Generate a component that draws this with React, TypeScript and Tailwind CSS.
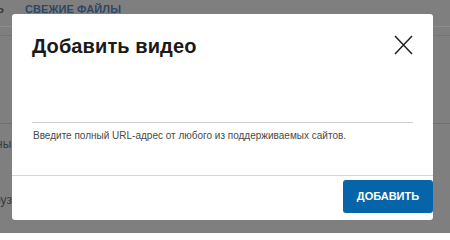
import React from "react";

export default function App() {
  return (
    <div
      className="relative w-[450px] h-[233px] overflow-hidden bg-[#7f7f7f]"
      style={{ fontFamily: '"Liberation Sans", Arial, sans-serif' }}
    >
      {/* background page (dimmed) */}
      <div className="flex flex-col">
        <div className="h-[26px] flex items-start pt-[2px] text-[11px] leading-[14px] font-bold">
          <span className="-ml-[4px] text-[#3a3a3a]">Ь</span>
          <span className="ml-[21px] text-[#2c4867] tracking-[0.1px]">СВЕЖИЕ ФАЙЛЫ</span>
        </div>
        <div className="h-px bg-[#8c8c8c]" />
        <div className="h-[8px]" />
        <div className="h-px bg-[#747474]" />
        <div className="h-[87px]" />
        <div className="h-px bg-[#6f6f6f]" />
        <div className="h-[13px]" />
        <div className="text-[12px] leading-[14px] text-[#3a3a3a] -ml-[4px]">ны</div>
        <div className="h-[42px]" />
        <div className="text-[12px] leading-[14px] text-[#3a3a3a] -ml-[6px]">руз</div>
      </div>

      {/* modal */}
      <div className="absolute left-[12px] top-[14px] w-[421px] h-[206px] bg-white rounded-[3px] flex flex-col">
        <div className="flex justify-between items-start pl-[20px] pr-[20px] pt-[20px] h-[108px]">
          <h2 className="text-[20px] leading-[24px] font-bold text-[#1a1a1a] tracking-[0.1px]">
            Добавить видео
          </h2>
          <svg width="19" height="20" viewBox="0 0 19 20" className="mt-[1px]">
            <path d="M1 1 L18 19 M18 1 L1 19" stroke="#222" strokeWidth="1.5" fill="none" />
          </svg>
        </div>
        <div className="mx-[20px] h-px bg-[#cfcfcf]" />
        <div className="pl-[21px] pt-[6px] text-[10px] leading-[14px] text-[#4a4a4a] h-[52px]">
          Введите полный URL-адрес от любого из поддерживаемых сайтов.
        </div>
        <div className="h-px bg-[#d6d6d6]" />
        <div className="flex justify-end pt-[4px]">
          <button className="w-[90px] h-[33px] rounded-[3px] bg-[#0665a8] text-white text-[11px] font-bold">
            ДОБАВИТЬ
          </button>
        </div>
      </div>
    </div>
  );
}
